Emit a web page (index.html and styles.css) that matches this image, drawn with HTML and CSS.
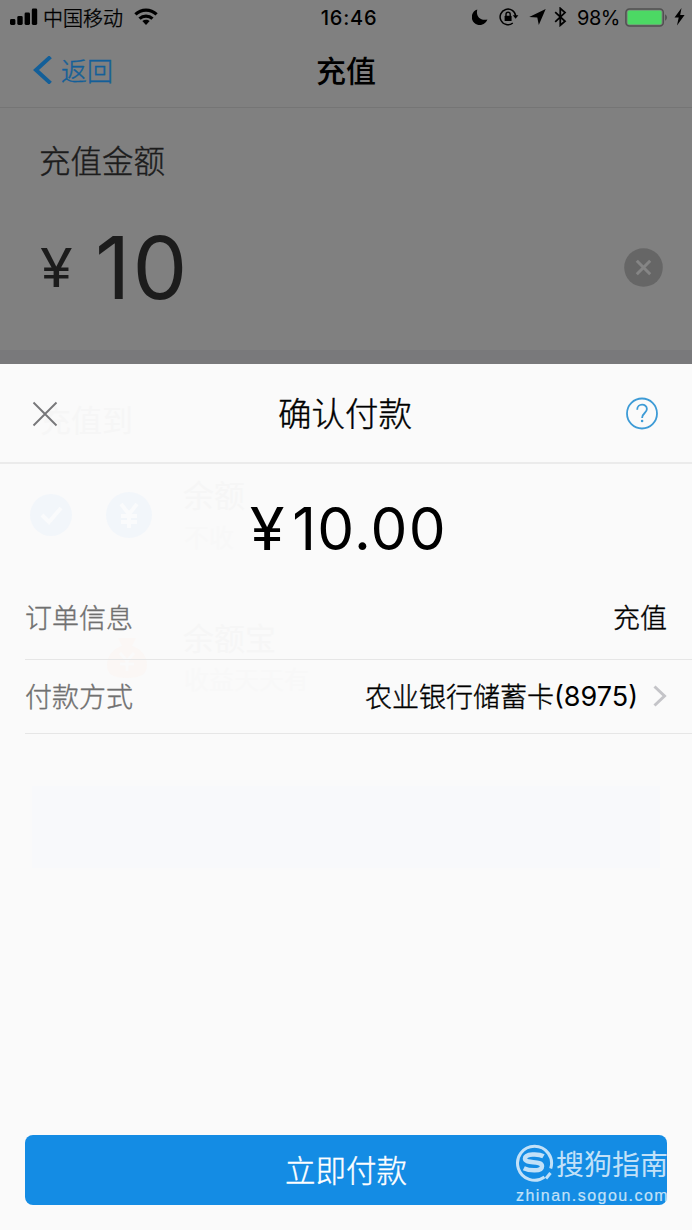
FILE: index.html
```html
<!DOCTYPE html>
<html lang="zh-CN">
<head>
<meta charset="utf-8">
<title>确认付款</title>
<link rel="stylesheet" href="styles.css">
</head>
<body>
<div class="screen">
  <div class="backdrop">
    <div class="status">
      <div class="status-side">
        <svg class="signal" width="28" height="18" viewBox="0 0 28 18"><rect x="0" y="11" width="5.400" height="6" rx="1.400"/><rect x="7.300" y="8" width="5.400" height="9" rx="1.400"/><rect x="14.600" y="4.500" width="5.400" height="12.500" rx="1.400"/><rect x="21.800" y="0.500" width="5.400" height="16.500" rx="1.400"/></svg>
        <span class="carrier">中国移动</span>
        <svg class="wifi" width="24" height="18" viewBox="0 0 24 18"><g fill="none" stroke="#000" stroke-width="3.200"><path d="M1.400 6.400C7.400.7 16.600.7 22.600 6.400"/><path d="M5.500 10.600C9.200 7.200 14.800 7.200 18.500 10.600"/></g><path d="M8.300 13.100C10.500 11.200 13.500 11.200 15.700 13.100L12 17Z"/></svg>
      </div>
      <span class="clock">16:46</span>
      <div class="status-side status-right">
        <svg class="moon" width="16" height="16" viewBox="0 0 16 16"><path d="M5.300.4C3.600 7 8 12 15.400 10.400A8 8 0 1 1 5.300.4Z"/></svg>
        <svg class="lock" width="20" height="18" viewBox="0 0 20 18"><path d="M16.700 8.200A7.800 7.800 0 1 0 13.800 15" fill="none" stroke="#000" stroke-width="1.500"/><path d="M13.800 7.200H19.400L16.600 10.800Z"/><rect x="5.600" y="7.700" width="7" height="5.400" rx=".7"/><path d="M7 8V6.400a2.100 2.100 0 0 1 4.200 0V8" fill="none" stroke="#000" stroke-width="1.400"/></svg>
        <svg class="arrow" width="17" height="16" viewBox="0 0 17 16"><path d="M16.700.1L9.800 16 8.300 8.400.2 7.900Z"/></svg>
        <svg class="bluetooth" width="13" height="20" viewBox="0 0 13 20"><path d="M1.200 5.200L11 14.300 6.300 18.300V1.400L11 5.600 1.200 14.800" fill="none" stroke="#000" stroke-width="1.800"/></svg>
        <span class="percent">98%</span>
        <svg class="battery" width="43" height="19" viewBox="0 0 43 19"><rect x=".9" y=".9" width="37.400" height="17.200" rx="3.500" fill="none" stroke="#505050" stroke-width="1.500"/><rect x="2.600" y="2.600" width="34" height="13.800" rx="1.600" fill="#4cd964"/><path d="M40 6.300c2.800 1.500 2.800 4.900 0 6.400Z" fill="#555"/></svg>
        <svg class="bolt" width="11" height="18" viewBox="0 0 11 18"><path d="M7.500 0L.5 9.600H4.700L3 17.500 10.600 7H6.200Z"/></svg>
      </div>
    </div>
    <div class="nav">
      <div class="back"><svg width="19" height="28" viewBox="0 0 19 28"><path d="M17.500 .8L3 14 17.500 27.200" fill="none" stroke="#135f99" stroke-width="4"/></svg><span>返回</span></div>
      <span class="nav-title">充值</span>
      <div class="nav-end"></div>
    </div>
    <div class="form">
      <span class="form-label">充值金额</span>
      <div class="amount">
        <span class="amount-yen">¥</span>
        <span class="amount-value">10</span>
        <svg class="clear" width="40" height="40" viewBox="0 0 40 40"><circle cx="20.500" cy="19.500" r="19.300" fill="#666"/><path d="M13.800 12.800L27.200 26.200M27.200 12.800L13.800 26.200" stroke="#858585" stroke-width="3"/></svg>
      </div>
    </div>
  </div>
  <div class="sheet">
    <div class="ghost">
      <span class="ghost-text ghost-heading">充值到</span>
      <svg class="ghost-icons" width="130" height="50" viewBox="0 0 130 50"><g fill="#f2f6fa"><circle cx="22" cy="25" r="21"/><circle cx="100" cy="25" r="23"/></g><g fill="none" stroke="#fafbfc" stroke-width="4"><path d="M13 25l7 7 12-14M92 14l8 10 8-10M100 24v14M92 26h16M92 32h16"/></g></svg>
      <span class="ghost-text ghost-balance">余额</span>
      <span class="ghost-text ghost-note ghost-balance-note">不收</span>
      <svg class="ghost-bag" width="42" height="44" viewBox="0 0 42 44"><path d="M12 2h18l-4 8c10 3 15 11 15 19 0 9-6 13-20 13S1 38 1 29c0-8 5-16 15-19Z" fill="#fbf7f5"/><path d="M14 17l7 8 7-8M21 25v10M14 28h14" fill="none" stroke="#fafafa" stroke-width="3"/></svg>
      <span class="ghost-text ghost-fund">余额宝</span>
      <span class="ghost-text ghost-note ghost-fund-note">收益天天有</span>
      <div class="ghost-button"></div>
    </div>
    <div class="sheet-head">
      <svg width="26" height="26" viewBox="0 0 26 26"><path d="M1.500 1.500L24.500 24.500M24.500 1.500L1.500 24.500" stroke="#77777a" stroke-width="1.900"/></svg>
      <span class="sheet-title">确认付款</span>
      <svg width="34" height="34" viewBox="0 0 34 34"><g fill="none" stroke="#3d9bd6" stroke-width="1.800"><circle cx="17" cy="16.500" r="15"/><path d="M12.200 12.700C12.200 6 21.900 6.200 21.900 12 21.900 16.100 17.100 16 17.100 21"/></g><circle cx="17.100" cy="24" r="1.300" fill="#3d9bd6"/></svg>
    </div>
    <div class="total"><span class="total-yen">¥</span><span class="total-value">10.00</span></div>
    <div class="rows">
      <div class="row row-order"><span class="row-label">订单信息</span><span class="row-value">充值</span></div>
      <div class="row row-method"><span class="row-label">付款方式</span><span class="row-value">农业银行储蓄卡<span class="card-no">(8975)</span></span><svg width="14" height="22" viewBox="0 0 14 22"><path d="M1.500 1.500L11.500 11 1.500 20.500" fill="none" stroke="#c4c4c8" stroke-width="3"/></svg></div>
    </div>
    <div class="pay">立即付款</div>
    <div class="watermark">
      <div class="mark-top">
        <svg width="39" height="39" viewBox="0 0 39 39"><g fill="none" stroke="currentColor"><path d="M29.500 33A17 17 0 1 1 35.700 24.500" stroke-width="3"/><path d="M35.500 29L31 34.500" stroke-width="3"/><path d="M28.500 12.300C24 9.600 10 9.300 10 14.600 10 20.500 27 15.800 27 22.200 27 28 14 26.800 8.800 24.200" stroke-width="4.500"/></g></svg>
        <span class="mark-name">搜狗指南</span>
      </div>
      <span class="mark-url">zhinan.sogou.com</span>
    </div>
  </div>
</div>
</body>
</html>
```
FILE: styles.css
```css
* { box-sizing: border-box; }
body {
  margin: 0;
  font-family: Inter, "Noto Sans CJK SC", sans-serif;
  color: #000;
}
svg { display: block; flex: none; }
span { white-space: nowrap; }
.screen {
  width: 692px;
  height: 1230px;
  display: flex;
  flex-direction: column;
  overflow: hidden;
}
.carrier, .back, .form-label, .sheet-title, .rows, .pay {
  font-weight: 300;
  -webkit-text-stroke: 0.400px currentColor;
}
.backdrop {
  height: 364px;
  background: #808080;
  border-bottom: 14px solid #79797b;
}
.status {
  height: 34px;
  padding: 0 8px 0 10px;
  display: flex;
  align-items: center;
  font-size: 20px;
  line-height: 34px;
}
.status-side { flex: 1; display: flex; align-items: center; }
.status-right { justify-content: flex-end; margin-right: -1px; }
.carrier { margin-left: 5px; padding-top: 3px; }
.wifi { margin-left: 11px; }
.clock { font-weight: 500; letter-spacing: 0.800px; padding: 1px 0 0 3px; }
.lock { margin-left: 11px; }
.arrow { margin-left: 10px; }
.bluetooth { margin-left: 8px; }
.percent { margin-left: 10px; padding-top: 1px; letter-spacing: -0.500px; }
.battery { margin-left: 5px; }
.bolt { margin-left: 6px; }
.nav {
  height: 74px;
  padding: 0 33px;
  display: flex;
  align-items: center;
  border-bottom: 1px solid #757575;
}
.back {
  flex: 1;
  display: flex;
  align-items: center;
  gap: 9px;
  font-size: 26px;
  line-height: 40px;
  color: #135f99;
}
.back svg { margin-top: -1px; }
.back span { padding-top: 2px; }
.nav-end { flex: 1; }
.nav-title { font-size: 30px; line-height: 40px; font-weight: 500; }
.form {
  padding: 32px 29px 0 39px;
  color: #1c1c1c;
}
.form-label { display: block; font-size: 31.500px; line-height: 44px; }
.amount {
  margin-top: 30px;
  height: 108px;
  display: flex;
  align-items: center;
}
.amount-yen { font-size: 53px; line-height: 60px; width: 55px; padding-left: 1px; transform: scaleX(1.120); transform-origin: left; }
.amount-value { font-size: 87px; line-height: 108px; flex: 1; letter-spacing: 2px; padding-left: 1px; }
.sheet {
  position: relative;
  flex: 1;
  display: flex;
  flex-direction: column;
  background: #fafafa;
}
.sheet > * { position: relative; }
.sheet > .ghost { position: absolute; inset: 0; }
.ghost > * { position: absolute; }
.ghost-text { color: #f6f6f6; font-size: 31px; line-height: 40px; }
.ghost-note { color: #f8f8f8; font-size: 25px; line-height: 34px; }
.ghost-heading { left: 40px; top: 37px; }
.ghost-icons { left: 29px; top: 126px; }
.ghost-balance { left: 183px; top: 112px; }
.ghost-balance-note { left: 184px; top: 157px; }
.ghost-bag { left: 106px; top: 272px; }
.ghost-fund { left: 183px; top: 255px; }
.ghost-fund-note { left: 184px; top: 299px; }
.ghost-button { left: 32px; top: 422px; width: 628px; height: 82px; background: #f8f9fb; }
.sheet-head {
  height: 100px;
  padding: 2px 33px 0 32px;
  display: flex;
  align-items: center;
  justify-content: space-between;
  border-bottom: 2px solid #ebebeb;
}
.sheet-title { font-size: 33.500px; line-height: 48px; padding: 0 0 0 7px; }
.total {
  height: 116px;
  padding: 13px 0 0 6px;
  display: flex;
  justify-content: center;
  font-size: 58.500px;
  line-height: 103px;
}
.total-yen { margin-right: 9px; transform: scaleX(1.080); }
.total-value { letter-spacing: 1.300px; }
.rows { padding-left: 25px; font-size: 27px; line-height: 40px; }
.row {
  display: flex;
  align-items: center;
  border-bottom: 1px solid #e6e6e6;
  padding-right: 25px;
}
.row-order { height: 80px; padding-bottom: 1px; }
.row-method { height: 74px; }
.row-method span { position: relative; top: 1px; }
.row-method .card-no { top: -1px; font-weight: 400; -webkit-text-stroke: 0; }
.row-label { flex: 1; color: #707070; }
.row svg { margin: -1px 0 0 15px; }
.pay {
  margin: auto 25px 25px;
  height: 70px;
  border-radius: 8px;
  background: #148ce4;
  color: #fff;
  font-size: 30.500px;
  line-height: 71px;
  text-align: center;
}
.sheet > .watermark {
  position: absolute;
  left: 515px;
  top: 779px;
  color: #c2e1f8;
}
.mark-top { display: flex; align-items: center; gap: 2px; }
.mark-name { font-size: 28px; line-height: 37px; padding-top: 4px; }
.mark-url { display: block; font-family: "Liberation Sans", sans-serif; font-size: 16px; line-height: 20px; letter-spacing: 1.450px; margin: 2px 0 0 1px; -webkit-text-stroke: 0.200px currentColor; }
```
